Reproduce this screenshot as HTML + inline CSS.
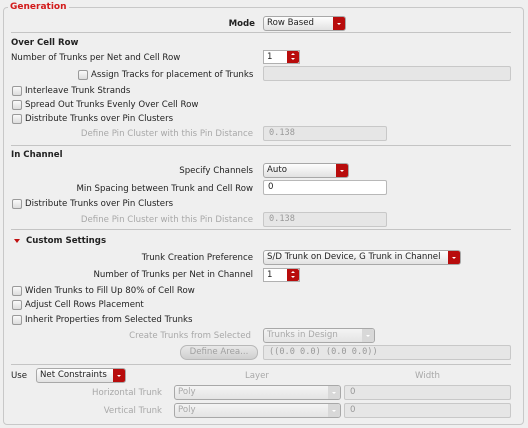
<!DOCTYPE html><html><head><style>
body{margin:0;width:528px;height:428px;background:#efefef;font-family:"DejaVu Sans","Liberation Sans",sans-serif;font-size:8.6px;color:#222;position:relative;overflow:hidden}
div{position:absolute;box-sizing:border-box}
.t{white-space:nowrap;line-height:10px;margin-top:1px}
.r{text-align:right;width:260px}
.g{color:#a8a8a8}
.b{font-weight:bold}
.frame{left:3px;top:7px;width:521px;height:418px;border:1px solid #c8c8c8;border-radius:4px}
.hl{height:1px;background:#c4c4c4;left:11px;width:500px}
.cb{width:10px;height:10px;border:1px solid #9a9a9a;border-radius:2px;background:linear-gradient(#fafafa,#dcdcdc);margin-top:1px}
.combo{height:15px;border:1px solid #a8a8a8;border-radius:3px;background:linear-gradient(#fdfdfd,#e2e2e2);padding-left:3px;line-height:13px;white-space:nowrap}
.btn{position:absolute;right:0;top:0;width:12px;height:13px;background:#b80c0c;border-radius:0 2px 2px 0}
.btn:after{content:"";position:absolute;left:4px;top:6px;border-left:2px solid transparent;border-right:2px solid transparent;border-top:2px solid #fff}
.dis .btn{background:#d8d8d8}
.dis{color:#a8a8a8;background:linear-gradient(#f4f4f4,#e4e4e4)}
.fld{height:15px;border:1px solid #c8c8c8;border-radius:2px;background:#e6e6e6;padding-left:5px;line-height:13px;font-family:"DejaVu Sans Mono","Liberation Mono",monospace;color:#999}
.wf{background:#fff;border-color:#b8b8b8;color:#222;font-family:"DejaVu Sans",sans-serif}
.spin{width:37px;height:14px;border:1px solid #b0b0b0;background:#fff;padding-left:3px;line-height:12px}
.spin .btn{height:12px}
.spin .btn:after{top:2px;border-top:none;border-bottom:2px solid #fff}
.spin .btn:before{content:"";position:absolute;left:4px;top:7px;border-left:2px solid transparent;border-right:2px solid transparent;border-top:2px solid #fff}
</style></head><body>
<div class="frame"></div>
<div class="t b" style="left:8px;top:1px;color:#d21a1a;background:#efefef;padding:0 2px;font-size:9px">Generation</div>

<div class="t b r" style="left:-5px;top:18px">Mode</div>
<div class="combo" style="left:263px;top:16px;width:83px">Row Based<div class="btn"></div></div>
<div class="hl" style="top:32px"></div>

<div class="t b" style="left:11px;top:37px">Over Cell Row</div>
<div class="t" style="left:11px;top:52px">Number of Trunks per Net and Cell Row</div>
<div class="spin" style="left:263px;top:50px">1<div class="btn"></div></div>
<div class="cb" style="left:78px;top:69px"></div>
<div class="t" style="left:91px;top:69px">Assign Tracks for placement of Trunks</div>
<div class="fld" style="left:263px;top:66px;width:248px"></div>
<div class="cb" style="left:12px;top:85px"></div><div class="t" style="left:25px;top:85px">Interleave Trunk Strands</div>
<div class="cb" style="left:12px;top:99px"></div><div class="t" style="left:25px;top:99px">Spread Out Trunks Evenly Over Cell Row</div>
<div class="cb" style="left:12px;top:113px"></div><div class="t" style="left:25px;top:113px">Distribute Trunks over Pin Clusters</div>
<div class="t g r" style="left:-7px;top:128px">Define Pin Cluster with this Pin Distance</div>
<div class="fld" style="left:263px;top:126px;width:124px">0.138</div>
<div class="hl" style="top:145px"></div>

<div class="t b" style="left:11px;top:149px">In Channel</div>
<div class="t r" style="left:-7px;top:165px">Specify Channels</div>
<div class="combo" style="left:263px;top:163px;width:86px">Auto<div class="btn"></div></div>
<div class="t r" style="left:-7px;top:183px">Min Spacing between Trunk and Cell Row</div>
<div class="fld wf" style="left:263px;top:180px;width:124px;padding-left:4px">0</div>
<div class="cb" style="left:12px;top:198px"></div><div class="t" style="left:25px;top:198px">Distribute Trunks over Pin Clusters</div>
<div class="t g r" style="left:-7px;top:214px">Define Pin Cluster with this Pin Distance</div>
<div class="fld" style="left:263px;top:212px;width:124px">0.138</div>
<div class="hl" style="top:229px"></div>

<div style="left:14px;top:239px;border-left:3px solid transparent;border-right:3px solid transparent;border-top:4px solid #c01010"></div>
<div class="t b" style="left:26px;top:235px">Custom Settings</div>
<div class="t r" style="left:-7px;top:252px">Trunk Creation Preference</div>
<div class="combo" style="left:263px;top:250px;width:198px">S/D Trunk on Device, G Trunk in Channel<div class="btn"></div></div>
<div class="t r" style="left:-7px;top:269px">Number of Trunks per Net in Channel</div>
<div class="spin" style="left:263px;top:268px">1<div class="btn"></div></div>
<div class="cb" style="left:12px;top:285px"></div><div class="t" style="left:25px;top:285px">Widen Trunks to Fill Up 80% of Cell Row</div>
<div class="cb" style="left:12px;top:299px"></div><div class="t" style="left:25px;top:299px">Adjust Cell Rows Placement</div>
<div class="cb" style="left:12px;top:314px"></div><div class="t" style="left:25px;top:314px">Inherit Properties from Selected Trunks</div>
<div class="t g r" style="left:-9px;top:330px">Create Trunks from Selected</div>
<div class="combo dis" style="left:263px;top:328px;width:112px">Trunks in Design<div class="btn"></div></div>
<div style="left:180px;top:345px;width:78px;height:15px;border:1px solid #b8b8b8;border-radius:7px;background:linear-gradient(#e8e8e8,#cfcfcf);color:#a0a0a0;text-align:center;line-height:13px">Define Area...</div>
<div class="fld" style="left:263px;top:345px;width:248px">((0.0 0.0) (0.0 0.0))</div>
<div class="hl" style="top:364px"></div>

<div class="t" style="left:11px;top:370px">Use</div>
<div class="combo" style="left:36px;top:368px;width:90px">Net Constraints<div class="btn"></div></div>
<div class="t g" style="left:245px;top:370px">Layer</div>
<div class="t g" style="left:415px;top:370px">Width</div>
<div class="t g" style="left:60px;top:387px;width:102px;text-align:right">Horizontal Trunk</div>
<div class="combo dis" style="left:174px;top:385px;width:167px">Poly<div class="btn"></div></div>
<div class="fld" style="left:344px;top:385px;width:167px;font-family:'DejaVu Sans',sans-serif">0</div>
<div class="t g" style="left:60px;top:405px;width:102px;text-align:right">Vertical Trunk</div>
<div class="combo dis" style="left:174px;top:403px;width:167px">Poly<div class="btn"></div></div>
<div class="fld" style="left:344px;top:403px;width:167px;font-family:'DejaVu Sans',sans-serif">0</div>
</body></html>
